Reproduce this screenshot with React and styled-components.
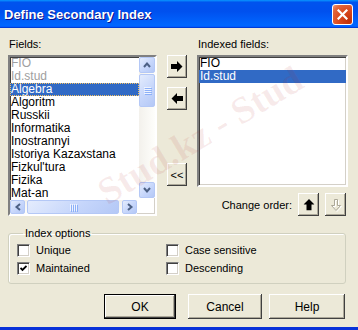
import React from "react";
import styled, { createGlobalStyle } from "styled-components";

const Global = createGlobalStyle`
  html, body { margin: 0; padding: 0; background: #ECE9D8; }
  body {
    width: 358px; height: 330px; overflow: hidden;
    font-family: "Liberation Sans", Arial, sans-serif;
    font-size: 11px; color: #000;
  }
  * { box-sizing: border-box; }
`;

const Window = styled.div`
  position: relative;
  width: 358px;
  height: 330px;
  display: flex;
  flex-direction: column;
  background: #ECE9D8;
  overflow: hidden;
`;

const TitleBar = styled.div`
  flex: none;
  height: 28px;
  display: flex;
  align-items: center;
  justify-content: space-between;
  padding: 0 5px 0 4px;
  background: linear-gradient(180deg, #0997ff, #0053ee 8%, #0050ee 40%, #0066ff 88%, #0066ff 93%, #005bff 95%, #003dd7 96%, #003dd7);
`;

const Title = styled.span`
  color: #fff;
  font-weight: bold;
  font-size: 13px;
  text-shadow: 1px 1px 0 #0f1089;
`;

const CloseBtn = styled.div`
  width: 21px;
  height: 21px;
  border: 1px solid #fff;
  border-radius: 3px;
  background: radial-gradient(circle at 85% 85%, #c0300a 0%, #d9481d 45%, #e2673d 80%, #f09a7c 100%);
  display: flex;
  align-items: center;
  justify-content: center;
`;

const Body = styled.div`
  flex: 1;
  display: flex;
  flex-direction: column;
  padding: 10px 13px 0 8px;
  border-bottom: 3px solid #0831d9;
`;

const TopGrid = styled.div`
  display: grid;
  grid-template-columns: 149px 40px 151px;
  grid-template-rows: 13px 161px;
  row-gap: 4px;
`;

const Label = styled.div`
  line-height: 13px;
  padding-left: 1px;
  white-space: nowrap;
`;

const Sunken = styled.div`
  background: #fff;
  border: 2px solid;
  border-color: #808080 #fff #fff #808080;
  box-shadow: inset 1px 1px 0 #404040, inset -1px -1px 0 #d4d0c8;
`;

const ListBox = styled(Sunken)`
  display: grid;
  grid-template-columns: 129px 16px;
  grid-template-rows: 143px 14px;
`;

const Items = styled.div`
  display: flex;
  flex-direction: column;
  overflow: hidden;
`;

const Item = styled.div`
  height: 13px;
  line-height: 13px;
  padding-left: 1px;
  font-size: 12px;
  white-space: nowrap;
  color: ${(p) => (p.$selected ? "#fff" : p.$disabled ? "#a0a0a0" : "#000")};
  background: ${(p) => (p.$selected ? "#316ac5" : "transparent")};
  outline: ${(p) => (p.$focus ? "1px dotted #f5c060" : "none")};
  outline-offset: -1px;
`;

const VScroll = styled.div`
  height: 141px;
  display: flex;
  flex-direction: column;
  background: linear-gradient(90deg, #f3f1ec, #fefefb);
`;

const HScroll = styled.div`
  width: 127px;
  height: 14px;
  display: flex;
  background: linear-gradient(180deg, #f3f1ec, #fefefb);
`;

const SBtn = styled.div`
  flex: none;
  width: ${(p) => p.$w}px;
  height: ${(p) => p.$h}px;
  border: 1px solid #b4c8f6;
  border-radius: 2px;
  background: linear-gradient(135deg, #e4ecfd 0%, #c6d6fb 55%, #b4c8f6 100%);
  display: flex;
  align-items: center;
  justify-content: center;
`;

const Thumb = styled(SBtn)`
  margin: ${(p) => p.$m};
  flex-direction: ${(p) => (p.$vertical ? "column" : "row")};
  gap: 1px;
`;

const Grip = styled.span`
  display: block;
  width: ${(p) => (p.$vertical ? "7px" : "1px")};
  height: ${(p) => (p.$vertical ? "1px" : "7px")};
  background: #eef3fe;
  box-shadow: 1px 1px 0 #8cb0f8;
`;

const Spacer = styled.div`
  flex: 1;
`;

const MidCol = styled.div`
  display: flex;
  flex-direction: column;
  align-items: center;
`;

const ClassicBtn = styled.button`
  font: inherit;
  padding: 0;
  margin: 0;
  width: ${(p) => p.$w || 20}px;
  height: ${(p) => p.$h || 23}px;
  margin-top: ${(p) => p.$mt || 0}px;
  background: #ece9d8;
  border: none;
  color: #000;
  display: flex;
  align-items: center;
  justify-content: center;
  box-shadow: inset -1px -1px 0 #404040, inset 1px 1px 0 #fff, inset -2px -2px 0 #aca899;
`;

const RightCol = styled.div`
  display: flex;
  flex-direction: column;
`;

const IndexedList = styled(Sunken)`
  height: 132px;
  display: flex;
  flex-direction: column;
`;

const OrderRow = styled.div`
  margin-top: 6px;
  display: flex;
  align-items: center;
  justify-content: flex-end;
  padding-right: 2px;
  gap: 6px;
`;

const Group = styled.fieldset`
  margin: 11px 0 0 0;
  padding: 3px 8px 8px 8px;
  width: 338px;
  border: 1px solid #d0d0bf;
  border-radius: 3px;
  box-shadow: inset 1px 1px 0 #fff;
  display: grid;
  grid-template-columns: 149px 1fr;
  row-gap: 4px;
  legend {
    padding: 0 2px;
    margin-left: 6px;
    line-height: 13px;
  }
`;

const Check = styled.label`
  display: flex;
  align-items: center;
  gap: 6px;
  height: 14px;
  white-space: nowrap;
`;

const Box = styled.span`
  width: 13px;
  height: 13px;
  flex: none;
  background: #fff;
  border: 1px solid;
  border-color: #808080 #fff #fff #808080;
  box-shadow: inset 1px 1px 0 #404040, inset -1px -1px 0 #d4d0c8;
  display: flex;
  align-items: center;
  justify-content: center;
`;

const ButtonRow = styled.div`
  margin-top: 10px;
  display: flex;
  justify-content: flex-end;
`;

const DialogBtn = styled.button`
  font: inherit;
  font-size: 12px;
  width: ${(p) => p.$w}px;
  margin-left: ${(p) => p.$ml || 0}px;
  height: 25px;
  padding: 0;
  background: #ece9d8;
  color: #000;
  border: ${(p) => (p.$default ? "1px solid #000" : "none")};
  box-shadow: inset -1px -1px 0 #404040, inset 1px 1px 0 #fff, inset -2px -2px 0 #aca899;
`;

const Watermark = styled.div`
  position: absolute;
  inset: 0;
  pointer-events: none;
  overflow: hidden;
`;

const MarkLine = styled.span`
  position: absolute;
  left: ${(p) => p.$x}px;
  top: ${(p) => p.$y}px;
  transform: translate(-50%, -50%) rotate(-31deg);
  font-family: "Liberation Serif", "Times New Roman", serif;
  font-weight: bold;
  font-size: 38px;
  white-space: nowrap;
  color: rgba(180, 40, 40, 0.09);
`;

const Chevron = ({ dir }) => {
  const rot = { up: 0, down: 180, left: 270, right: 90 }[dir];
  return (
    <svg width="8" height="8" viewBox="0 0 8 8" style={{ transform: `rotate(${rot}deg)` }}>
      <polyline points="1,6 4,2.5 7,6" fill="none" stroke="#4d6185" strokeWidth="2" />
    </svg>
  );
};

const Arrow = ({ dir }) => {
  const rot = { right: 0, left: 180, up: 270, down: 90 }[dir];
  return (
    <svg width="12" height="11" viewBox="0 0 12 11" style={{ transform: `rotate(${rot}deg)` }}>
      <polygon points="0,3 6,3 6,0 11.5,5.5 6,11 6,8 0,8" fill="#000" />
    </svg>
  );
};

const DisabledDown = () => (
  <svg width="12" height="14" viewBox="0 0 12 14">
    <polygon points="4.5,1.5 7.5,1.5 7.5,7.5 10.5,7.5 6,12.5 1.5,7.5 4.5,7.5" fill="none" stroke="#fff" strokeWidth="1" transform="translate(1,1)" />
    <polygon points="4.5,1.5 7.5,1.5 7.5,7.5 10.5,7.5 6,12.5 1.5,7.5 4.5,7.5" fill="none" stroke="#aca899" strokeWidth="1" />
  </svg>
);

const CheckMark = () => (
  <svg width="7" height="7" viewBox="0 0 7 7">
    <polyline points="0.5,3 2.5,5 6.5,1" fill="none" stroke="#000" strokeWidth="1.8" />
  </svg>
);

const fields = [
  { t: "FIO", d: true },
  { t: "Id.stud", d: true },
  { t: "Algebra", s: true, f: true },
  { t: "Algoritm" },
  { t: "Russkii" },
  { t: "Informatika" },
  { t: "Inostrannyi" },
  { t: "Istoriya Kazaxstana" },
  { t: "Fizkul'tura" },
  { t: "Fizika" },
  { t: "Mat-an" },
];

export default function App() {
  return (
    <Window>
      <Global />
      <TitleBar>
        <Title>Define Secondary Index</Title>
        <CloseBtn>
          <svg width="11" height="11" viewBox="0 0 11 11">
            <path d="M1.5 1.5 L9.5 9.5 M9.5 1.5 L1.5 9.5" stroke="#fff" strokeWidth="2.2" strokeLinecap="square" />
          </svg>
        </CloseBtn>
      </TitleBar>
      <Body>
        <TopGrid>
          <Label>Fields:</Label>
          <div />
          <Label>Indexed fields:</Label>

          <ListBox>
            <Items>
              {fields.map((f) => (
                <Item key={f.t} $disabled={f.d} $selected={f.s} $focus={f.f}>
                  {f.t}
                </Item>
              ))}
            </Items>
            <VScroll>
              <SBtn $w={16} $h={16}><Chevron dir="up" /></SBtn>
              <Thumb $w={16} $h={33} $m="1px 0 0 0" $vertical>
                <Grip $vertical />
                <Grip $vertical />
                <Grip $vertical />
                <Grip $vertical />
              </Thumb>
              <Spacer />
              <SBtn $w={16} $h={16}><Chevron dir="down" /></SBtn>
            </VScroll>
            <HScroll>
              <SBtn $w={15} $h={14}><Chevron dir="left" /></SBtn>
              <Thumb $w={92} $h={14} $m="0 0 0 2px">
                <Grip />
                <Grip />
                <Grip />
                <Grip />
              </Thumb>
              <Spacer />
              <SBtn $w={15} $h={14}><Chevron dir="right" /></SBtn>
            </HScroll>
            <div />
          </ListBox>

          <MidCol>
            <ClassicBtn><Arrow dir="right" /></ClassicBtn>
            <ClassicBtn $mt={9}><Arrow dir="left" /></ClassicBtn>
            <ClassicBtn $mt={53}>&lt;&lt;</ClassicBtn>
          </MidCol>

          <RightCol>
            <IndexedList>
              <Item>FIO</Item>
              <Item $selected>Id.stud</Item>
            </IndexedList>
            <OrderRow>
              <span>Change order:</span>
              <ClassicBtn $w={21} $h={23}><Arrow dir="up" /></ClassicBtn>
              <ClassicBtn $w={21} $h={23}><DisabledDown /></ClassicBtn>
            </OrderRow>
          </RightCol>
        </TopGrid>

        <Group>
          <legend>Index options</legend>
          <Check><Box />Unique</Check>
          <Check><Box />Case sensitive</Check>
          <Check><Box><CheckMark /></Box>Maintained</Check>
          <Check><Box />Descending</Check>
        </Group>

        <ButtonRow>
          <DialogBtn $default $w={72}>OK</DialogBtn>
          <DialogBtn $w={74} $ml={12}>Cancel</DialogBtn>
          <DialogBtn $w={76} $ml={7}>Help</DialogBtn>
        </ButtonRow>
      </Body>
      <Watermark>
        <MarkLine $x={200} $y={135}>Stud.kz - Stud</MarkLine>
      </Watermark>
    </Window>
  );
}
